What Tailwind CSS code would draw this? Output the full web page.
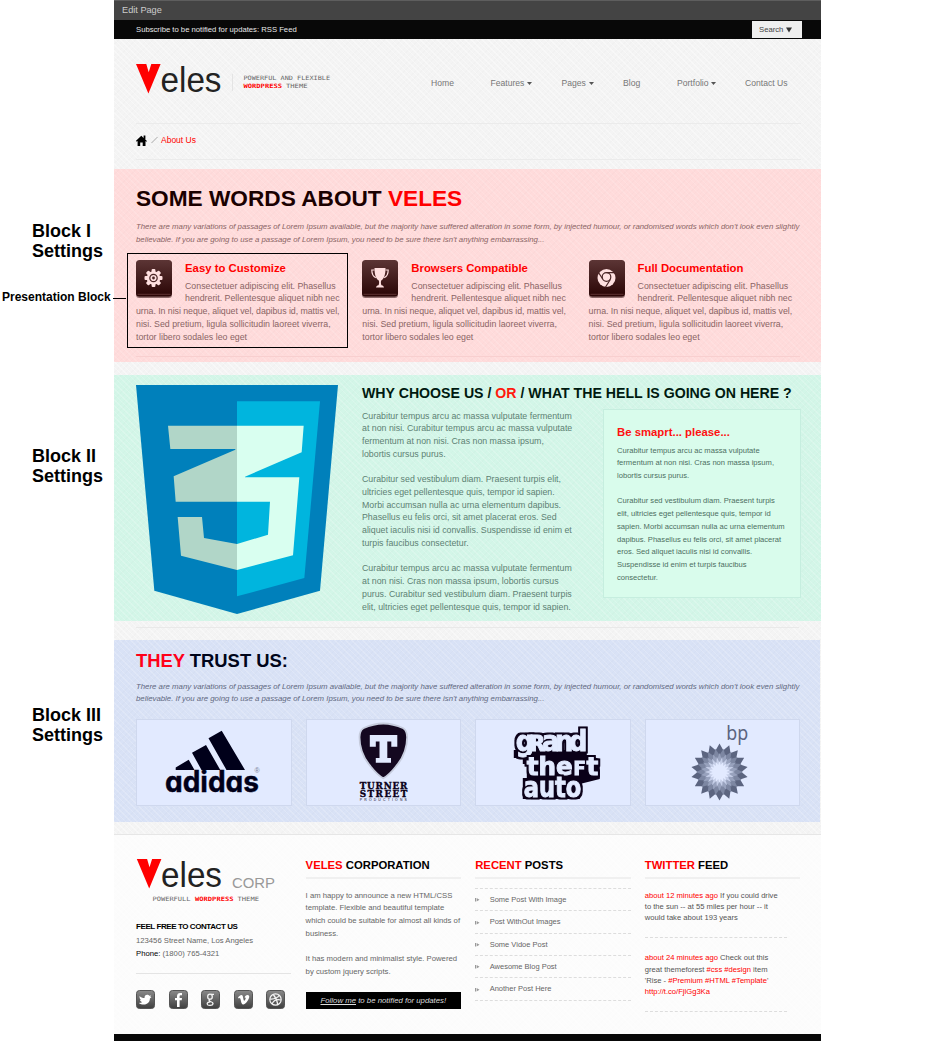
<!DOCTYPE html>
<html lang="en">
<head>
<meta charset="utf-8">
<title>Veles - About Us</title>
<script src="https://cdn.jsdelivr.net/npm/@tailwindcss/browser@4"></script>
</head>
<body class="bg-white font-['Liberation_Sans',Arial,sans-serif]">
<svg width="0" height="0" class="absolute">
  <defs>
    <linearGradient id="tile" x1="0" y1="0" x2="0" y2="1"><stop offset="0" stop-color="#5c3535"/><stop offset="1" stop-color="#2a0505"/></linearGradient>
    <linearGradient id="soc" x1="0" y1="0" x2="0" y2="1"><stop offset="0" stop-color="#8a8a8a"/><stop offset="1" stop-color="#3e3e3e"/></linearGradient>
    <filter id="outline" x="-10%" y="-10%" width="120%" height="120%" color-interpolation-filters="sRGB">
      <feMorphology in="SourceAlpha" operator="dilate" radius="1.700" result="d"/>
      <feFlood flood-color="#0a0018"/><feComposite in2="d" operator="in" result="o"/>
      <feMerge><feMergeNode in="o"/><feMergeNode in="SourceGraphic"/></feMerge>
    </filter>
  </defs>
</svg>
<div class="relative flex h-[1042px] w-[940px] overflow-hidden">

  <aside class="w-[114px] shrink-0 whitespace-nowrap font-bold text-black">
    <h2 class="mt-[221px] pl-8 text-[18px] leading-[20px]">Block I<br>Settings</h2>
    <p class="mt-[28px] pl-[2px] text-[12px] leading-[16px]">Presentation Block</p>
    <h2 class="mt-[141px] pl-8 text-[18px] leading-[20px]">Block II<br>Settings</h2>
    <h2 class="mt-[219px] pl-8 text-[18px] leading-[20px]">Block III<br>Settings</h2>
  </aside>

  <div class="h-[1041px] w-[707px] shrink-0 whitespace-nowrap bg-[#f4f4f4] bg-[repeating-linear-gradient(45deg,rgba(255,255,255,0.4)_0_1px,transparent_1px_4px),repeating-linear-gradient(-45deg,rgba(0,0,0,0.012)_0_1px,transparent_1px_4px)]">
    <div class="h-[20px] border-t border-[#5e5e5e] bg-[#444] pl-2 text-[9.2px] leading-[19px] text-[#ccc]">Edit Page</div>
    <div class="flex h-[19px] justify-between bg-[#080808] pl-[22px] pr-[19px] text-[7.7px] leading-[19px] text-[#e8e8e8]">
      <span>Subscribe to be notified for updates: RSS Feed</span>
      <span class="mt-px flex h-[17px] w-[50px] items-center gap-[3px] bg-[#efefef] pl-[7px] text-[7.7px] leading-[17px] text-[#444]">Search
        <svg width="6" height="6" viewBox="0 0 6 6"><path d="M0 0.5h6L3 5.5z" fill="#333"/></svg></span>
    </div>

    <header class="flex h-[84px] pl-[22px]">
      <svg width="200" height="60" viewBox="136 39 200 60" class="shrink-0">
        <path d="M136 64h10.3l2.4 8.3L151.300 64H160.600L148.400 93.500z" fill="#f00"/>
        <text x="160.500" y="92" font-size="34.500" textLength="61" lengthAdjust="spacingAndGlyphs" fill="#222">eles</text>
        <path d="M232.500 74v17" stroke="#e4e4e4"/>
        <g font-family="DejaVu Sans Mono" font-size="6" fill="#666">
          <text x="243.500" y="80" textLength="86.500" lengthAdjust="spacingAndGlyphs">POWERFUL AND FLEXIBLE</text>
          <text x="243.500" y="88" textLength="38.500" lengthAdjust="spacingAndGlyphs" fill="#f00" font-weight="bold">WORDPRESS</text>
          <text x="286" y="88" textLength="21.500" lengthAdjust="spacingAndGlyphs">THEME</text>
        </g>
      </svg>
      <nav class="ml-[95px] mt-[38px] grid h-3 grid-cols-[59.500px_71px_61.500px_54px_68px_44px] text-[8.6px] leading-3 text-[#777]">
        <a>Home</a>
        <a class="flex items-center gap-[3px]">Features<svg width="5" height="3" viewBox="0 0 5 3"><path d="M0 0h5L2.500 3z" fill="#555"/></svg></a>
        <a class="flex items-center gap-[3px]">Pages<svg width="5" height="3" viewBox="0 0 5 3"><path d="M0 0h5L2.500 3z" fill="#555"/></svg></a>
        <a>Blog</a>
        <a class="flex items-center gap-[2px]">Portfolio<svg width="5" height="3" viewBox="0 0 5 3"><path d="M0 0h5L2.500 3z" fill="#555"/></svg></a>
        <a>Contact Us</a>
      </nav>
    </header>
    <div class="mx-[22px] mr-[20px] flex h-[37px] items-center border-y border-[#ebebeb] pb-[3px] text-[8.5px] text-[#f00]">
      <svg width="11" height="11" viewBox="0 0 11 11"><path d="M0 5.800L5.300.8 7.600 3V.5h1.800v4.200L11 6l-.7.700-.8-.600V11H6.700V7.500H4.200V11H1.600V6.100l-.9.700z" fill="#000"/></svg>
      <svg width="7" height="8" viewBox="0 0 7 8" class="ml-[4px] mr-[3px]"><path d="M.5 7L6.500 1" stroke="#aaa"/></svg>
      <span>About Us</span>
    </div>

    <section class="mt-[9px] h-[192.500px] bg-[#ffdbdb] bg-[repeating-linear-gradient(45deg,rgba(255,255,255,0.13)_0_1px,transparent_1px_4px),repeating-linear-gradient(-45deg,rgba(0,0,0,0.012)_0_1px,transparent_1px_4px)] pl-[22px] pt-[17px]">
      <h1 class="text-[22.650px] font-bold leading-[24px] text-[#1a0000]">SOME WORDS ABOUT <span class="text-[#f00]">VELES</span></h1>
      <p class="mt-[11px] text-[7.820px] italic leading-[12.750px] text-[#8a6464]">There are many variations of passages of Lorem Ipsum available, but the majority have suffered alteration in some form, by injected humour, or randomised words which don't look even slightly<br>believable. If you are going to use a passage of Lorem Ipsum, you need to be sure there isn't anything embarrassing...</p>
      <div class="mt-[13px] grid grid-cols-[226.300px_226.300px_212px]">
        <article class="text-[8.800px] leading-[12.750px] text-[#8a6464]">
          <svg width="36" height="38" viewBox="0 0 36 38" class="float-left mr-[13px]"><rect y="1" width="36" height="37" rx="3.500" fill="#8d6a6a"/><rect width="36" height="36.500" rx="3.500" fill="url(#tile)"/><path d="M1.500 34.300h33" stroke="#6b4040" stroke-width=".8"/>
            <g transform="translate(17.500 18)"><g fill="#ffe0e0"><rect x="-1.900" y="-9" width="3.800" height="18" rx="1"/><rect x="-1.900" y="-9" width="3.800" height="18" rx="1" transform="rotate(45)"/><rect x="-1.900" y="-9" width="3.800" height="18" rx="1" transform="rotate(90)"/><rect x="-1.900" y="-9" width="3.800" height="18" rx="1" transform="rotate(135)"/><circle r="6.800"/></g><circle r="3.700" fill="none" stroke="#4a2525" stroke-width="1.200"/><circle r="1.400" fill="#4a2525"/></g></svg>
          <h3 class="mb-[5px] pt-px text-[11.350px] font-bold leading-[14px] text-[#f00]">Easy to Customize</h3>
          <p>Consectetuer adipiscing elit. Phasellus<br>hendrerit. Pellentesque aliquet nibh nec<br><span class="-tracking-[0.05px]">urna. In nisi neque, aliquet vel, dapibus id, mattis vel,</span><br>nisi. Sed pretium, ligula sollicitudin laoreet viverra,<br>tortor libero sodales leo eget</p>
        </article>
        <article class="text-[8.800px] leading-[12.750px] text-[#8a6464]">
          <svg width="36" height="38" viewBox="0 0 36 38" class="float-left mr-[13px]"><rect y="1" width="36" height="37" rx="3.500" fill="#8d6a6a"/><rect width="36" height="36.500" rx="3.500" fill="url(#tile)"/><path d="M1.500 34.300h33" stroke="#6b4040" stroke-width=".8"/>
            <path d="M12.500 8h11c0 6-1 10.500-4.300 12.500-.6 1.500-.3 3.500.3 4.800 1.500.3 2.300 1 2.500 2.200h-8c.2-1.200 1-1.900 2.500-2.200.6-1.300.9-3.300.3-4.800C13.500 18.500 12.500 14 12.500 8z" fill="#ffe0e0"/><path d="M12.500 10H9.800c0 3.500 1.400 6.500 4 7.800M23.500 10h2.700c0 3.500-1.400 6.500-4 7.800" fill="none" stroke="#ffe0e0" stroke-width="1.200"/></svg>
          <h3 class="mb-[5px] pt-px text-[11.350px] font-bold leading-[14px] text-[#f00]">Browsers Compatible</h3>
          <p>Consectetuer adipiscing elit. Phasellus<br>hendrerit. Pellentesque aliquet nibh nec<br><span class="-tracking-[0.05px]">urna. In nisi neque, aliquet vel, dapibus id, mattis vel,</span><br>nisi. Sed pretium, ligula sollicitudin laoreet viverra,<br>tortor libero sodales leo eget</p>
        </article>
        <article class="text-[8.800px] leading-[12.750px] text-[#8a6464]">
          <svg width="36" height="38" viewBox="0 0 36 38" class="float-left mr-[13px]"><rect y="1" width="36" height="37" rx="3.500" fill="#8d6a6a"/><rect width="36" height="36.500" rx="3.500" fill="url(#tile)"/><path d="M1.500 34.300h33" stroke="#6b4040" stroke-width=".8"/>
            <circle cx="17.500" cy="18" r="9" fill="#ffe0e0"/><g fill="none" stroke="#4a2525" stroke-width="1.200"><circle cx="17.500" cy="17" r="4.300"/><path d="M17.500 12.700H26M13.700 19L9.800 13M21.300 19.500l-5 8"/></g></svg>
          <h3 class="mb-[5px] pt-px text-[11.350px] font-bold leading-[14px] text-[#f00]">Full Documentation</h3>
          <p>Consectetuer adipiscing elit. Phasellus<br>hendrerit. Pellentesque aliquet nibh nec<br><span class="-tracking-[0.05px]">urna. In nisi neque, aliquet vel, dapibus id, mattis vel,</span><br>nisi. Sed pretium, ligula sollicitudin laoreet viverra,<br>tortor libero sodales leo eget</p>
        </article>
      </div>
      <div class="mr-[21px] mt-[13px] h-px bg-[#f8cfcf]"></div>
    </section>

    <section class="mt-[13.500px] flex h-[245.500px] bg-[#d3f6e8] bg-[repeating-linear-gradient(45deg,rgba(255,255,255,0.18)_0_1px,transparent_1px_4px),repeating-linear-gradient(-45deg,rgba(0,0,0,0.012)_0_1px,transparent_1px_4px)] pl-[22px] pt-[10px]">
      <svg width="202" height="229" viewBox="78 45 606 687" preserveAspectRatio="none" class="shrink-0">
        <path d="M78 45H684L630 662 381 732 133 662z" fill="#0080bb"/>
        <path d="M381 94H630L583 624 381 679z" fill="#00b5de"/>
        <path d="M174 167H381V395H197L191 319 376 239V237H181zM203 441H276L282 504 381 522V600L213 557z" fill="#b1d6c8"/>
        <path d="M381 167H581L575 247 405 320V322H568L549 556 381 600V522L474 494 480 395H381z" fill="#d9fff0"/>
      </svg>
      <div class="ml-[24px]">
        <h2 class="text-[14.150px] font-bold leading-4 text-[#001a10]">WHY CHOOSE US / <span class="text-[#ff1a0d]">OR</span> / WHAT THE HELL IS GOING ON HERE ?</h2>
        <div class="mt-[8px] flex">
          <p class="w-[241px] pt-[0.500px] text-[8.800px] leading-[12.740px] text-[#5d8173]">Curabitur tempus arcu ac massa vulputate fermentum<br>at non nisi. Curabitur tempus arcu ac massa vulputate<br>fermentum at non nisi. Cras non massa ipsum,<br>lobortis cursus purus.<br><br>Curabitur sed vestibulum diam. Praesent turpis elit,<br>ultricies eget pellentesque quis, tempor id sapien.<br>Morbi accumsan nulla ac urna elementum dapibus.<br>Phasellus eu felis orci, sit amet placerat eros. Sed<br>aliquet iaculis nisi id convallis. Suspendisse id enim et<br>turpis faucibus consectetur.<br><br>Curabitur tempus arcu ac massa vulputate fermentum<br>at non nisi. Cras non massa ipsum, lobortis cursus<br>purus. Curabitur sed vestibulum diam. Praesent turpis<br>elit, ultricies eget pellentesque quis, tempor id sapien.</p>
          <div class="h-[189px] w-[198px] border border-[#c6eedf] bg-[#d9fcec] pl-[13px] pt-[15px] text-[7.600px] leading-[12.740px] text-[#4c6e61]">
            <h3 class="mb-[5.500px] text-[11.350px] font-bold leading-[14px] text-[#f11]">Be smaprt... please...</h3>
            Curabitur tempus arcu ac massa vulputate<br>fermentum at non nisi. Cras non massa ipsum,<br>lobortis cursus purus.<br><br>Curabitur sed vestibulum diam. Praesent turpis<br>elit, ultricies eget pellentesque quis, tempor id<br>sapien. Morbi accumsan nulla ac urna elementum<br>dapibus. Phasellus eu felis orci, sit amet placerat<br>eros. Sed aliquet iaculis nisi id convallis.<br>Suspendisse id enim et turpis faucibus<br>consectetur.
          </div>
        </div>
      </div>
    </section>
    <div class="mx-[22px] mt-[6.500px] h-px bg-[#e9e9e9]"></div>

    <section class="mt-[12px] h-[182px] w-[706px] bg-[#d9e2f6] bg-[repeating-linear-gradient(45deg,rgba(255,255,255,0.18)_0_1px,transparent_1px_4px),repeating-linear-gradient(-45deg,rgba(0,0,0,0.012)_0_1px,transparent_1px_4px)] pl-[22px] pt-[11px]">
      <h2 class="text-[18.400px] font-bold leading-5 text-[#00051a]"><span class="text-[#ff0019]">THEY</span> TRUST US:</h2>
      <p class="mt-[9.500px] text-[7.820px] italic leading-[12.750px] text-[#616880]">There are many variations of passages of Lorem Ipsum available, but the majority have suffered alteration in some form, by injected humour, or randomised words which don't look even slightly<br>believable. If you are going to use a passage of Lorem Ipsum, you need to be sure there isn't anything embarrassing...</p>
      <div class="mt-[13px] grid grid-cols-[155.500px_155.500px_155.500px_155.500px] gap-x-[14.100px]">
        <div class="h-[87px] border border-[#cfd8ee] bg-[#e2eaff]">
          <svg width="153" height="85" viewBox="137 720 153 85"><g fill="#00001a"><path d="M175.700 767.500L188.700 759.700 194.500 770H175.700zM192 752.700L206 745 220.300 770H201.500zM208.500 738.300L221.700 730.700 245 770H226.500z"/><text x="165" y="791.500" font-size="29.500" font-weight="700" font-family="Inter" stroke="#00001a" stroke-width=".4" textLength="94" lengthAdjust="spacingAndGlyphs" class="[font-feature-settings:'cv11','ss05']">adidas</text></g><text x="254.500" y="773" font-size="7" fill="#777d94">®</text></svg>
        </div>
        <div class="h-[87px] border border-[#cfd8ee] bg-[#e2eaff]">
          <svg width="153" height="85" viewBox="306.700 720 153 85"><path d="M383 723.500c7 0 14 2 20 4.700 3 2 3.800 5 3.800 9 0 12-5 22-11 29-4 5-9 10-12.800 12-3.800-2-8.800-7-12.800-12-6-7-11-17-11-29 0-4 .8-7 3.800-9 6-2.700 13-4.700 20-4.700z" fill="#140820" stroke="#c6ccdd" stroke-width="1.800"/>
            <path d="M369.500 735h27.500v11.800h-6V741.500H387V758h3.700v4.700H375.500V758H379.200V741.500H375.500V746.800h-6z" fill="#e2eaff"/>
            <g fill="#0a0018" font-family="DejaVu Serif" font-weight="bold"><text x="359.500" y="788.700" font-size="8.800" stroke="#0a0018" stroke-width=".35" textLength="47.500">TURNER</text><text x="359.500" y="797" font-size="8.800" stroke="#0a0018" stroke-width=".35" textLength="47.500">STREET</text><text x="359.500" y="801.300" font-size="3.400" font-family="Liberation Sans" font-weight="normal" textLength="47">PRODUCTIONS</text></g></svg>
        </div>
        <div class="h-[87px] border border-[#cfd8ee] bg-[#e2eaff]">
          <svg width="153" height="85" viewBox="476.200 720 153 85"><path d="M514 750h73v5l13 4v20l-12 3-8 2v15H523V778h4V764h-4v-6h-9z" fill="#0a0018"/>
            <g fill="#e2eaff" stroke="#e2eaff" stroke-width=".9" font-weight="bold" font-family="DejaVu Sans" filter="url(#outline)"><text x="516" y="751" font-size="28.500" textLength="71.500" lengthAdjust="spacing" class="[font-stretch:condensed]">gʀand</text></g>
            <g fill="#e2eaff" stroke="#e2eaff" stroke-width=".9" font-weight="bold" font-family="DejaVu Sans" filter="url(#outline)"><text x="527" y="775" font-size="25" textLength="71.500" lengthAdjust="spacingAndGlyphs" class="[font-stretch:condensed]">theꜰt</text></g>
            <g fill="#e2eaff" stroke="#e2eaff" stroke-width=".9" font-weight="bold" font-family="DejaVu Sans" filter="url(#outline)"><text x="524" y="797" font-size="27.500" textLength="57.500" lengthAdjust="spacingAndGlyphs" class="[font-stretch:condensed]">auto</text></g></svg>
        </div>
        <div class="h-[87px] border border-[#cfd8ee] bg-[#e2eaff]">
          <svg width="153" height="85" viewBox="645.800 720 153 85"><text x="726" y="740" font-size="19" font-family="Noto Sans" fill="#5c6580" textLength="22" lengthAdjust="spacingAndGlyphs">bp</text><g id="sunflower" transform="translate(719.300 772)"></g></svg>
        </div>
      </div>
    </section>

    <footer class="mt-[12px] grid h-[200px] grid-cols-[169.600px_169.600px_169.600px_155.500px] border-t border-[#e6e6e6] bg-white/70 pl-[22px] text-[7.720px] text-[#666]">
      <div class="pt-[19px]">
        <svg width="160" height="52" viewBox="136 854 160 52">
          <path d="M136.800 859h10.300l2.400 8.300 2.600-8.300h9.300L149.200 888.500z" fill="#f00"/>
          <text x="161" y="887" font-size="34.500" textLength="61" lengthAdjust="spacingAndGlyphs" fill="#222">eles</text>
          <text x="232" y="887.500" font-size="15" textLength="43" lengthAdjust="spacingAndGlyphs" fill="#999">CORP</text>
          <g font-family="DejaVu Sans Mono" font-size="6" fill="#666">
            <text x="152.500" y="900.500" textLength="38" lengthAdjust="spacingAndGlyphs">POWERFULL</text>
            <text x="195" y="900.500" textLength="38.500" lengthAdjust="spacingAndGlyphs" fill="#f00" font-weight="bold">WORDPRESS</text>
            <text x="237.500" y="900.500" textLength="21.500" lengthAdjust="spacingAndGlyphs">THEME</text>
          </g>
        </svg>
        <h4 class="mt-[14px] text-[8px] font-bold leading-[13px] tracking-[-0.420px] text-black">FEEL FREE TO CONTACT US</h4>
        <p class="mt-[2px] text-[7.700px] leading-[12.750px]">123456 Street Name, Los Angeles<br><span class="text-black">Phone:</span> (1800) 765-4321</p>
        <div class="mt-[12px] h-px w-[155px] bg-[#e4e4e4]"></div>
        <div class="mt-[16px] flex gap-[13.500px]">
          <svg width="19" height="19" viewBox="0 0 19 19"><rect x=".5" y=".5" width="18" height="18" rx="3" fill="url(#soc)" stroke="#555"/><path d="M3.500 6c1.500 1.500 3 2 5 2 0-2 1-3.200 2.700-3.200 1 0 1.600.4 2 .9l2-.3-1 1.500 1.300.2-1.600 1.300c0 3.500-2.500 6-6 6-2 0-3.700-.4-5-1.500 1.300 0 2.400-.2 3.200-.9C5 11.800 4.200 11 4 10l1 .1C3.800 9 3.400 7.500 3.500 6z" fill="#fff"/></svg>
          <svg width="19" height="19" viewBox="0 0 19 19"><rect x=".5" y=".5" width="18" height="18" rx="3" fill="url(#soc)" stroke="#555"/><path d="M8 17V10.300H6V8h2V6.300C8 4.200 9.200 3 11.200 3H13v2.300h-1.300c-.8 0-1.100.4-1.100 1.100V8H13l-.3 2.300h-2.100V17z" fill="#fff"/></svg>
          <svg width="19" height="19" viewBox="0 0 19 19"><rect x=".5" y=".5" width="18" height="18" rx="3" fill="url(#soc)" stroke="#555"/><g fill="none" stroke="#f4f4f4" stroke-width="1.300"><ellipse cx="9" cy="6.700" rx="2.300" ry="2.500"/><path d="M10 4.300h3M9 9.200c-1.500 1-1.200 1.700.5 2.300 2 .7 2.700 1.200 2.500 2.500-.3 1.700-5.500 2-5.800 0C6 12.500 7.800 11.900 9.300 11.900"/></g></svg>
          <svg width="19" height="19" viewBox="0 0 19 19"><rect x=".5" y=".5" width="18" height="18" rx="3" fill="url(#soc)" stroke="#555"/><path d="M4 7.300C5.300 6.200 6.400 5 7.400 5c1.200 0 1.500 1.300 1.800 3 .3 1.700.6 2.800 1 2.800.5 0 1.500-1.700 1.500-2.500 0-.8-.6-.8-1.200-.6.5-1.900 1.700-2.900 3.200-2.800 1.200.1 1.700.9 1.500 2.300-.4 2.800-4 7.300-5.900 7.300-1.600 0-2-1.700-2.400-3.700C6.500 9 6.300 8 5.800 8c-.3 0-.8.300-1.100.500z" fill="#fff"/></svg>
          <svg width="19" height="19" viewBox="0 0 19 19"><rect x=".5" y=".5" width="18" height="18" rx="3" fill="url(#soc)" stroke="#555"/><g fill="none" stroke="#f4f4f4" stroke-width="1.200"><circle cx="9.500" cy="9.500" r="5.700"/><path d="M4 9c4 .3 7.500-1 9.500-4M7.300 4.500c2.500 3 4 6.500 4.400 10.300M6 14c1.500-3.500 5-5 9-4"/></g></svg>
        </div>
      </div>
      <div class="w-[155.500px] pt-[23px]">
        <h4 class="border-b-2 border-[#f0f0f0] pb-[4px] text-[11.300px] font-bold leading-[15px] text-black"><span class="text-[#f00]">VELES</span> CORPORATION</h4>
        <p class="mt-[10.500px] leading-[12.750px]">I am happy to announce a new HTML/CSS<br>template. Flexible and beautiful template<br>which could be suitable for almost all kinds of<br>business.<br><br>It has modern and minimalist style. Powered<br>by custom jquery scripts.</p>
        <p class="mt-[13px] h-[17px] bg-black text-center text-[7.800px] italic leading-[17px] text-[#ddd]"><u>Follow me</u> to be notified for updates!</p>
      </div>
      <div class="w-[155.500px] pt-[23px]">
        <h4 class="border-b-2 border-[#f0f0f0] pb-[4px] text-[11.300px] font-bold leading-[15px] text-black"><span class="text-[#f00]">RECENT</span> POSTS</h4>
        <ul class="mt-[9px] border-t border-dashed border-[#ddd] text-[7.500px] leading-[20.350px]">
          <li class="flex items-center gap-[10px] border-b border-dashed border-[#ddd] pt-px"><svg width="4.500" height="4" viewBox="0 0 4.500 4"><path d="M0 0h1v3.500H0zM1.600 0L4.500 1.700 1.600 3.500z" fill="#999"/></svg>Some Post With Image</li>
          <li class="flex items-center gap-[10px] border-b border-dashed border-[#ddd] pt-px"><svg width="4.500" height="4" viewBox="0 0 4.500 4"><path d="M0 0h1v3.500H0zM1.600 0L4.500 1.700 1.600 3.500z" fill="#999"/></svg>Post WithOut Images</li>
          <li class="flex items-center gap-[10px] border-b border-dashed border-[#ddd] pt-px"><svg width="4.500" height="4" viewBox="0 0 4.500 4"><path d="M0 0h1v3.500H0zM1.600 0L4.500 1.700 1.600 3.500z" fill="#999"/></svg>Some Vidoe Post</li>
          <li class="flex items-center gap-[10px] border-b border-dashed border-[#ddd] pt-px"><svg width="4.500" height="4" viewBox="0 0 4.500 4"><path d="M0 0h1v3.500H0zM1.600 0L4.500 1.700 1.600 3.500z" fill="#999"/></svg>Awesome Blog Post</li>
          <li class="flex items-center gap-[10px] border-b border-dashed border-[#ddd] pt-px"><svg width="4.500" height="4" viewBox="0 0 4.500 4"><path d="M0 0h1v3.500H0zM1.600 0L4.500 1.700 1.600 3.500z" fill="#999"/></svg>Another Post Here</li>
        </ul>
      </div>
      <div class="w-[155.500px] pt-[23px] text-[7.620px] leading-[11.300px] text-[#555] [&_b]:font-normal [&_b]:text-[#f00]">
        <h4 class="border-b-2 border-[#f0f0f0] pb-[4px] text-[11.300px] font-bold leading-[15px] text-black"><span class="text-[#f00]">TWITTER</span> FEED</h4>
        <p class="mt-[10.500px] w-[142px] border-b border-dashed border-[#ddd] pb-[14px]"><b>about 12 minutes ago</b> If you could drive<br>to the sun -- at 55 miles per hour -- it<br>would take about 193 years</p>
        <p class="mt-[14px] w-[142px] border-b border-dashed border-[#ddd] pb-[13.500px]"><b>about 24 minutes ago</b> Check out this<br>great themeforest <b>#css</b> <b>#design</b> item<br>'Rise - <b>#Premium</b> <b>#HTML</b> <b>#Template</b>'<br><b>http://t.co/FjlGg3Ka</b></p>
      </div>
    </footer>
    <div class="h-[7px] bg-[#080808]"></div>
  </div>

  <!-- callout frame around the first presentation block -->
  <div class="absolute left-[127px] top-[253px] h-[95px] w-[221px] border border-black"></div>
  <div class="absolute left-[113px] top-[298px] h-px w-[13px] bg-black"></div>
</div>
<script>
  // sunflower emblem: 18-pointed rings of decreasing radius
  const g = document.getElementById('sunflower');
  const rings = [[28.500, 22, '#5c6580', 0], [23.500, 17, '#7d87a2', 10], [19, 13, '#98a2bd', 0], [15.500, 9, '#c6cfe8', 10], [11, 7, '#e2eaff', 0]];
  for (const [R, r, fill, off] of rings) {
    const pts = [];
    for (let i = 0; i < 36; i++) {
      const a = (i * 10 + off - 90) * Math.PI / 180, d = i % 2 ? r : R;
      pts.push((d * Math.cos(a)).toFixed(2) + ',' + (d * Math.sin(a)).toFixed(2));
    }
    const p = document.createElementNS('http://www.w3.org/2000/svg', 'polygon');
    p.setAttribute('points', pts.join(' '));
    p.setAttribute('fill', fill);
    g.appendChild(p);
  }
</script>
</body>
</html>
